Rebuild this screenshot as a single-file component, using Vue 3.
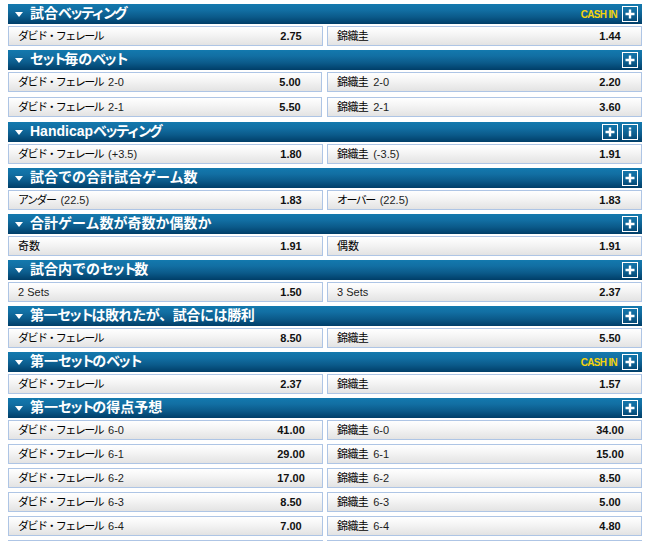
<script setup>
const DF = 'ダビド・フェレール'
const KN = '錦織圭'
const sections = [
  { title: '試合ベッティング', cash: true, rows: [[[DF, '', '2.75', 'kana'], [KN, '', '1.44', 'kanji']]] },
  { title: 'セット毎のベット', tight: true, rows: [
    [[DF, '2-0', '5.00', 'kana'], [KN, '2-0', '2.20', 'kanji']],
    [[DF, '2-1', '5.50', 'kana'], [KN, '2-1', '3.60', 'kanji']],
  ] },
  { title: 'Handicapベッティング', info: true, rows: [[[DF, '(+3.5)', '1.80', 'kana'], [KN, '(-3.5)', '1.91', 'kanji']]] },
  { title: '試合での合計試合ゲーム数', rows: [[['アンダー', '(22.5)', '1.83', 'kana'], ['オーバー', '(22.5)', '1.83', 'kana']]] },
  { title: '合計ゲーム数が奇数か偶数か', rows: [[['奇数', '', '1.91'], ['偶数', '', '1.91']]] },
  { title: '試合内でのセット数', rows: [[['', '2 Sets', '1.50'], ['', '3 Sets', '2.37']]] },
  { title: '第一セットは敗れたが、試合には勝利', narrow: true, rows: [[[DF, '', '8.50', 'kana'], [KN, '', '5.50', 'kanji']]] },
  { title: '第一セットのベット', cash: true, rows: [[[DF, '', '2.37', 'kana'], [KN, '', '1.57', 'kanji']]] },
  { title: '第一セットの得点予想', rows: [
    [[DF, '6-0', '41.00', 'kana'], [KN, '6-0', '34.00', 'kanji']],
    [[DF, '6-1', '29.00', 'kana'], [KN, '6-1', '15.00', 'kanji']],
    [[DF, '6-2', '17.00', 'kana'], [KN, '6-2', '8.50', 'kanji']],
    [[DF, '6-3', '8.50', 'kana'], [KN, '6-3', '5.00', 'kanji']],
    [[DF, '6-4', '7.00', 'kana'], [KN, '6-4', '4.80', 'kanji']],
    [['', '', ''], ['', '', '']],
  ] },
]

// Katakana runs holding a small ッ are set narrower in the reference's headings.
function runs(title) {
  return title.split(/([ァ-ヶー]*ッ[ァ-ヶー]*)/).filter(Boolean).map((text) => ({
    text,
    squeezed: text.includes('ッ'),
  }))
}
</script>

<template>
  <div class="page">
    <section v-for="s in sections" :key="s.title" class="market" :class="{ tight: s.tight }">
      <header class="bar">
        <span class="caret"></span>
        <h2 class="title" :class="{ narrow: s.narrow }"><span v-for="(p, k) in runs(s.title)" :key="k" :class="{ squeezed: p.squeezed }">{{ p.text }}</span></h2>
        <span v-if="s.cash" class="cash">CASH IN</span>
        <button class="tool" type="button" aria-label="expand">
          <svg width="14" height="14" viewBox="0 0 14 14"><path d="M2.5 7h9M7 2.5v9" stroke="#fff" stroke-width="2.4" fill="none" /></svg>
        </button>
        <button v-if="s.info" class="tool" type="button" aria-label="info">
          <svg width="14" height="14" viewBox="0 0 14 14"><path d="M5.8 2.5h2.4v2H5.800zM5.800 5.500h2.400v6H5.800z" fill="#fff" /></svg>
        </button>
      </header>
      <div v-for="(r, i) in s.rows" :key="i" class="pair">
        <div v-for="(c, j) in r" :key="j" class="sel">
          <span class="label"><span :class="c[3]">{{ c[0] }}</span><span v-if="c[1]" class="extra" :class="{ lead: c[0] }">{{ c[1] }}</span></span>
          <span class="odds">{{ c[2] }}</span>
        </div>
      </div>
    </section>
  </div>
</template>

<style scoped>
.page {
  height: 541px;
  overflow: hidden;
  box-sizing: border-box;
  padding: 4px 3px 0 8px;
  font-family: "Liberation Sans", "Noto Sans CJK JP", sans-serif;
  font-size: 11px;
  color: #000;
  background: #fff;
}
.market {
  display: flex;
  flex-direction: column;
  gap: 2px;
  margin-bottom: 4px;
}
.bar {
  height: 20px;
  box-sizing: border-box;
  padding: 2px 4px 2px 7px;
  display: flex;
  align-items: center;
  background: linear-gradient(#1379ae, #126fa3 30%, #0b5a8a 65%, #003e68);
  color: #fff;
}
.caret {
  width: 0;
  height: 0;
  border-left: 4px solid transparent;
  border-right: 4px solid transparent;
  border-top: 5px solid #fff;
  margin-right: 7px;
}
.title {
  margin: 0 0 2px;
  flex: 1;
  font-size: 14px;
  line-height: 16px;
  font-weight: 700;
  white-space: nowrap;
}
.title.narrow {
  letter-spacing: -0.4px;
}
.squeezed {
  letter-spacing: -2.6px;
}
.cash {
  color: #f4d30c;
  font-size: 10px;
  letter-spacing: -0.7px;
  font-weight: 700;
  margin-right: 5px;
}
.tool {
  width: 16px;
  height: 16px;
  box-sizing: border-box;
  padding: 0;
  border: 1px solid #fff;
  background: transparent;
  display: flex;
  align-items: center;
  justify-content: center;
  margin-left: 4px;
}
.bar .tool:first-of-type {
  margin-left: 0;
}
.pair {
  display: grid;
  grid-template-columns: 315px 315px;
  column-gap: 4px;
}
.market .pair + .pair {
  margin-top: 2px;
}
.tight {
  margin-bottom: 5px;
}
.tight .pair {
  grid-template-columns: 314px 315px;
  column-gap: 5px;
}
.market.tight .pair + .pair {
  margin-top: 3px;
}
.sel {
  height: 20px;
  box-sizing: border-box;
  border: 1px solid #aec5e5;
  background: linear-gradient(#fff, #f5f5f5 40%, #e3e3e3);
  display: flex;
  align-items: center;
  justify-content: space-between;
  padding-left: 9px;
  line-height: 18px;
  white-space: nowrap;
}
.kana {
  letter-spacing: -1.55px;
}
.kanji {
  letter-spacing: -0.6px;
}
.extra {
  color: #1d1d1d;
}
.extra.lead {
  margin-left: 5px;
}
.odds {
  width: 62px;
  text-align: center;
  font-weight: 700;
  color: #111;
}
</style>

<style>
html, body {
  margin: 0;
  overflow: hidden;
}
</style>
